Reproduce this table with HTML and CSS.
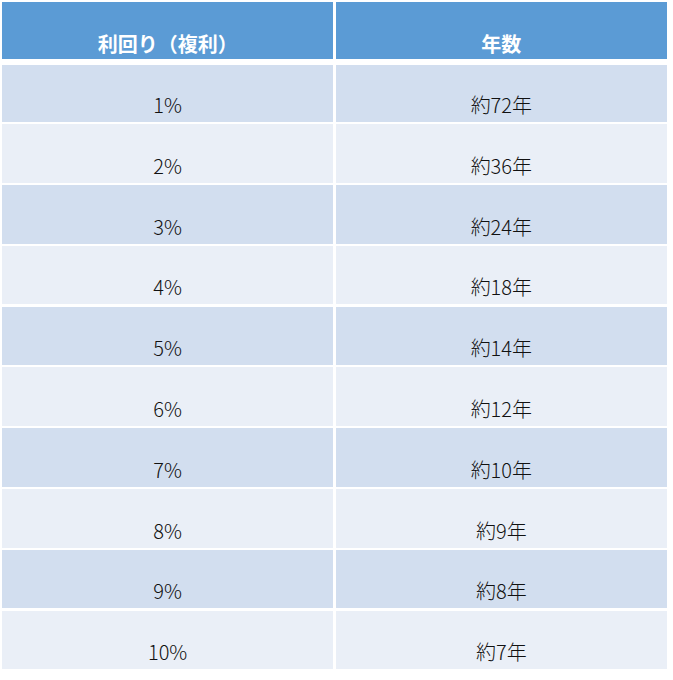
FILE: index.html
```html
<!DOCTYPE html>
<html lang="ja">
<head>
<meta charset="utf-8">
<link rel="stylesheet" href="styles.css">
</head>
<body>
<div class="table">
  <div class="head">
    <div class="hcell">利回り（複利）</div>
    <div class="hcell">年数</div>
  </div>
  <div class="body">
    <div class="cell odd">1%</div><div class="cell odd">約72年</div>
    <div class="cell even">2%</div><div class="cell even">約36年</div>
    <div class="cell odd">3%</div><div class="cell odd">約24年</div>
    <div class="cell even">4%</div><div class="cell even">約18年</div>
    <div class="cell odd">5%</div><div class="cell odd">約14年</div>
    <div class="cell even">6%</div><div class="cell even">約12年</div>
    <div class="cell odd">7%</div><div class="cell odd">約10年</div>
    <div class="cell even">8%</div><div class="cell even">約9年</div>
    <div class="cell odd">9%</div><div class="cell odd">約8年</div>
    <div class="cell even">10%</div><div class="cell even">約7年</div>
  </div>
</div>
</body>
</html>
```
FILE: styles.css
```css
html, body {
  margin: 0;
  padding: 0;
  background: #ffffff;
}
body {
  font-family: "Noto Sans CJK JP", "Noto Sans", sans-serif;
}
.table {
  display: flex;
  flex-direction: column;
  margin: 2px 0 0 2px;
  width: 665px;
}
.head {
  display: grid;
  grid-template-columns: 331.3px 331.3px;
  column-gap: 2.4px;
  height: 57.3px;
}
.hcell {
  background: #5b9bd5;
  color: #ffffff;
  font-weight: bold;
  font-size: 20px;
  line-height: 20px;
  display: flex;
  align-items: flex-end;
  justify-content: center;
  padding-bottom: 5.5px;
  box-sizing: border-box;
}
.body {
  margin-top: 6px;
  display: grid;
  grid-template-columns: 331.3px 331.3px;
  grid-template-rows: 56.7px repeat(9, 58.5px);
  column-gap: 2.4px;
  row-gap: 2.3px;
}
.cell {
  color: #111111;
  font-size: 20px;
  font-weight: 300;
  line-height: 20px;
  display: flex;
  align-items: flex-end;
  justify-content: center;
  padding-bottom: 7px;
  box-sizing: border-box;
}
.odd {
  background: #d2deef;
}
.even {
  background: #eaeff7;
}
```
